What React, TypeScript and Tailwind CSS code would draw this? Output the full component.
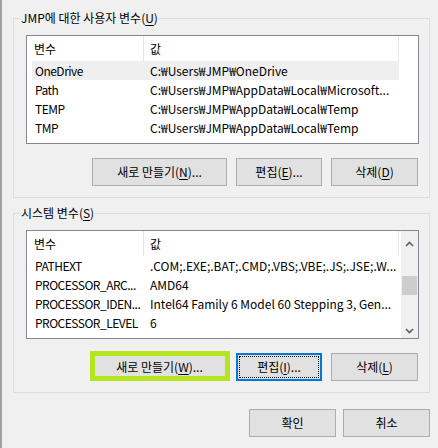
import type { ReactNode } from 'react';
import { clsx } from 'clsx';

type TRow = [string, string];

const userVars: TRow[] = [
  ['OneDrive', 'C:₩Users₩JMP₩OneDrive'],
  ['Path', 'C:₩Users₩JMP₩AppData₩Local₩Microsoft...'],
  ['TEMP', 'C:₩Users₩JMP₩AppData₩Local₩Temp'],
  ['TMP', 'C:₩Users₩JMP₩AppData₩Local₩Temp'],
];

const systemVars: TRow[] = [
  ['PATHEXT', '.COM;.EXE;.BAT;.CMD;.VBS;.VBE;.JS;.JSE;.W...'],
  ['PROCESSOR_ARC...', 'AMD64'],
  ['PROCESSOR_IDEN...', 'Intel64 Family 6 Model 60 Stepping 3, Gen...'],
  ['PROCESSOR_LEVEL', '6'],
];

function Key({ k }: { k: string }) {
  return <span className="underline underline-offset-2">{k}</span>;
}

function Chevron({ down }: { down?: boolean }) {
  return (
    <svg width="9" height="6" viewBox="0 0 9 6" className={clsx(down && 'rotate-180')}>
      <path d="M1 5 L4.5 1.5 L8 5" fill="none" stroke="#606060" strokeWidth="1.6" />
    </svg>
  );
}

function Scrollbar() {
  return (
    <div className="flex w-[17px] flex-col bg-[#f0f0f0]">
      <div className="flex h-[19px] items-end justify-center pb-[3px]">
        <Chevron />
      </div>
      <div className="flex-1">
        <div className="mx-px mt-[26px] h-[19px] bg-[#cdcdcd]" />
      </div>
      <div className="flex h-[17px] items-center justify-center pt-[2px]">
        <Chevron down />
      </div>
    </div>
  );
}

function VarList({ rows, selected, scroll }: { rows: TRow[]; selected?: number; scroll?: boolean }) {
  return (
    <div className="flex h-[109px] border border-[#828790] bg-white">
      <div className="min-w-0 flex-1">
        {/* header */}
        <div className="flex h-[25px] leading-[25px]">
          <div className="w-[117px] border-r border-[#e5e5e5] pl-[7px]">변수</div>
          <div className="w-[255px] border-r border-[#e5e5e5] pl-[6px]">값</div>
        </div>
        {rows.map(([name, value], i) => (
          <div
            key={name}
            className={clsx(
              'ml-[5px] flex h-[19px] w-[367px] whitespace-nowrap leading-[19px]',
              i === selected && 'bg-[#efefef]'
            )}
          >
            <div className="w-[111px] overflow-hidden pl-[3px] tracking-[-0.5px]">{name}</div>
            <div className="flex-1 overflow-hidden pl-[7px]">{value}</div>
          </div>
        ))}
      </div>
      {scroll && <Scrollbar />}
    </div>
  );
}

function Btn({ children, className, focused, marked }: { children: ReactNode; className?: string; focused?: boolean; marked?: boolean }) {
  return (
    <button
      className={clsx(
        'relative h-[28px] bg-[#e1e1e1] text-center leading-none text-black',
        focused ? 'border-2 border-[#0078d7]' : 'border border-[#adadad]',
        className
      )}
    >
      {children}
      {focused && <span className="absolute inset-px border border-dotted border-black" />}
      {marked && <span className="absolute -top-[3px] -right-[4px] -bottom-[1px] -left-[3px] border-[5px] border-[#b5e61d]" />}
    </button>
  );
}

function Group({ label, children }: { label: ReactNode; children: ReactNode }) {
  return (
    <div className="relative flex h-[180px] flex-col border border-[#dcdcdc] pt-[16px] pr-[10px] pb-[11px] pl-[12px]">
      <span className="absolute -top-[9px] left-[6px] bg-[#f0f0f0] px-px leading-[16px]">{label}</span>
      {children}
    </div>
  );
}

export default function App() {
  return (
    <div className="flex h-[448px] w-[438px] flex-col border-l-2 border-[#a0a0a0] bg-[#f0f0f0] pt-[18px] pr-[8px] pl-[11px] font-['Noto_Sans_CJK_KR',sans-serif] text-[12px] text-black">
      {/* user variables */}
      <Group label={<>JMP에 대한 사용자 변수(<Key k="U" />)</>}>
        <VarList rows={userVars} selected={0} />
        <div className="mt-[14px] flex justify-end gap-[9px] pr-px">
          <Btn className="w-[135px]">새로 만들기(<Key k="N" />)...</Btn>
          <Btn className="w-[86px]">편집(<Key k="E" />)...</Btn>
          <Btn className="w-[87px]">삭제(<Key k="D" />)</Btn>
        </div>
      </Group>
      {/* system variables */}
      <div className="mt-[15px]">
        <Group label={<>시스템 변수(<Key k="S" />)</>}>
          <VarList rows={systemVars} scroll />
          <div className="mt-[14px] flex justify-end gap-[9px] pr-px">
            <Btn className="w-[135px]" marked>새로 만들기(<Key k="W" />)...</Btn>
            <Btn className="w-[86px]" focused>편집(<Key k="I" />)...</Btn>
            <Btn className="w-[87px]">삭제(<Key k="L" />)</Btn>
          </div>
        </Group>
      </div>
      {/* dialog buttons */}
      <div className="mt-[16px] flex justify-end gap-[7px]">
        <Btn className="w-[87px]">확인</Btn>
        <Btn className="w-[87px]">취소</Btn>
      </div>
    </div>
  );
}
